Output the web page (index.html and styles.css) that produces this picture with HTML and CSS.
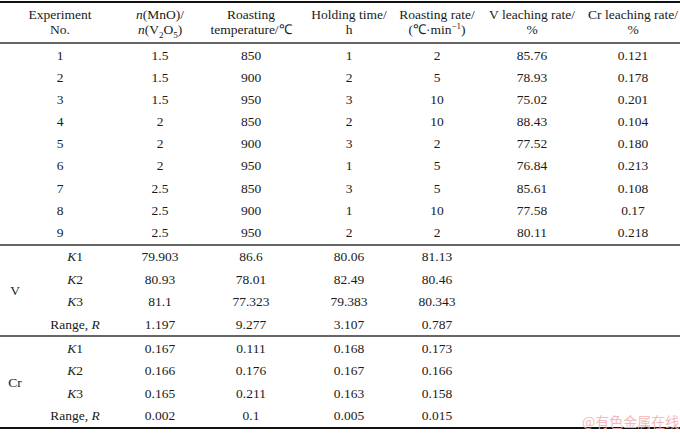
FILE: index.html
```html
<!DOCTYPE html>
<html>
<head>
<meta charset="utf-8">
<link rel="stylesheet" href="styles.css">
</head>
<body>
<div class="wrap">
<table class="orth">
<colgroup>
<col class="c-lab"><col class="c-k"><col class="c2"><col class="c3"><col class="c4"><col class="c5"><col class="c6"><col class="c7">
</colgroup>
<thead>
<tr class="head">
<th colspan="2">Experiment<br>No.</th>
<th><i>n</i>(MnO)/<br><i>n</i>(V<sub>2</sub>O<sub>5</sub>)</th>
<th>Roasting<br>temperature/℃</th>
<th>Holding time/<br>h</th>
<th>Roasting rate/<br>(℃·min<sup>−1</sup>)</th>
<th>V leaching rate/<br>%</th>
<th>Cr leaching rate/<br>%</th>
</tr>
</thead>
<tbody class="exp">
<tr><td colspan="2">1</td><td>1.5</td><td>850</td><td>1</td><td>2</td><td>85.76</td><td>0.121</td></tr>
<tr><td colspan="2">2</td><td>1.5</td><td>900</td><td>2</td><td>5</td><td>78.93</td><td>0.178</td></tr>
<tr><td colspan="2">3</td><td>1.5</td><td>950</td><td>3</td><td>10</td><td>75.02</td><td>0.201</td></tr>
<tr><td colspan="2">4</td><td>2</td><td>850</td><td>2</td><td>10</td><td>88.43</td><td>0.104</td></tr>
<tr><td colspan="2">5</td><td>2</td><td>900</td><td>3</td><td>2</td><td>77.52</td><td>0.180</td></tr>
<tr><td colspan="2">6</td><td>2</td><td>950</td><td>1</td><td>5</td><td>76.84</td><td>0.213</td></tr>
<tr><td colspan="2">7</td><td>2.5</td><td>850</td><td>3</td><td>5</td><td>85.61</td><td>0.108</td></tr>
<tr><td colspan="2">8</td><td>2.5</td><td>900</td><td>1</td><td>10</td><td>77.58</td><td>0.17</td></tr>
<tr class="last"><td colspan="2">9</td><td>2.5</td><td>950</td><td>2</td><td>2</td><td>80.11</td><td>0.218</td></tr>
</tbody>
<tbody class="grp">
<tr><td rowspan="4" class="lab">V</td><td><i>K</i>1</td><td>79.903</td><td>86.6</td><td>80.06</td><td>81.13</td><td></td><td></td></tr>
<tr><td><i>K</i>2</td><td>80.93</td><td>78.01</td><td>82.49</td><td>80.46</td><td></td><td></td></tr>
<tr><td><i>K</i>3</td><td>81.1</td><td>77.323</td><td>79.383</td><td>80.343</td><td></td><td></td></tr>
<tr class="last"><td>Range, <i>R</i></td><td>1.197</td><td>9.277</td><td>3.107</td><td>0.787</td><td></td><td></td></tr>
</tbody>
<tbody class="grp final">
<tr><td rowspan="4" class="lab">Cr</td><td><i>K</i>1</td><td>0.167</td><td>0.111</td><td>0.168</td><td>0.173</td><td></td><td></td></tr>
<tr><td><i>K</i>2</td><td>0.166</td><td>0.176</td><td>0.167</td><td>0.166</td><td></td><td></td></tr>
<tr><td><i>K</i>3</td><td>0.165</td><td>0.211</td><td>0.163</td><td>0.158</td><td></td><td></td></tr>
<tr class="last"><td>Range, <i>R</i></td><td>0.002</td><td>0.1</td><td>0.005</td><td>0.015</td><td></td><td></td></tr>
</tbody>
</table>
<div class="mark">@有色金属在线</div>
</div>
</body>
</html>
```
FILE: styles.css
```css
html, body {
  margin: 0;
  padding: 0;
  background: #fff;
}
.wrap {
  position: relative;
  width: 680px;
  height: 433px;
  padding-top: 1px;
  box-sizing: border-box;
  overflow: hidden;
}
.orth {
  width: 680px;
  table-layout: fixed;
  border-collapse: collapse;
  font-family: "Liberation Serif", "Times New Roman", serif;
  font-size: 13.5px;
  color: #1a1a1a;
}
.c-lab { width: 30px; }
.c-k { width: 90px; }
.c2 { width: 80px; }
.c3 { width: 102px; }
.c4 { width: 94px; }
.c5 { width: 82px; }
.c6 { width: 108px; }
.c7 { width: 94px; }
.orth th, .orth td {
  padding: 0;
  text-align: center;
  vertical-align: middle;
  font-weight: normal;
  white-space: nowrap;
}
.head th {
  border-top: 2px solid #111;
  border-bottom: 2px solid #666;
  height: 34px;
  line-height: 15px;
  padding: 2px 0 3px;
}
.orth sub, .orth sup {
  font-size: 9px;
  line-height: 0;
}
.exp td {
  height: 22px;
  line-height: 15px;
}
.exp tr:nth-child(3n) td {
  height: 22.6px;
}
.exp .last td {
  border-bottom: 2px solid #666;
}
.grp td {
  height: 22.4px;
  line-height: 15px;
}
.grp .last td, .grp td.lab {
  border-bottom: 2px solid #666;
}
.final .last td, .final td.lab {
  border-bottom: 2px solid #111;
}
.mark {
  position: absolute;
  left: 582px;
  top: 413px;
  font-family: "Noto Sans CJK SC", sans-serif;
  font-size: 14px;
  line-height: 17px;
  color: #f1b3b3;
  opacity: 0.9;
}
```
